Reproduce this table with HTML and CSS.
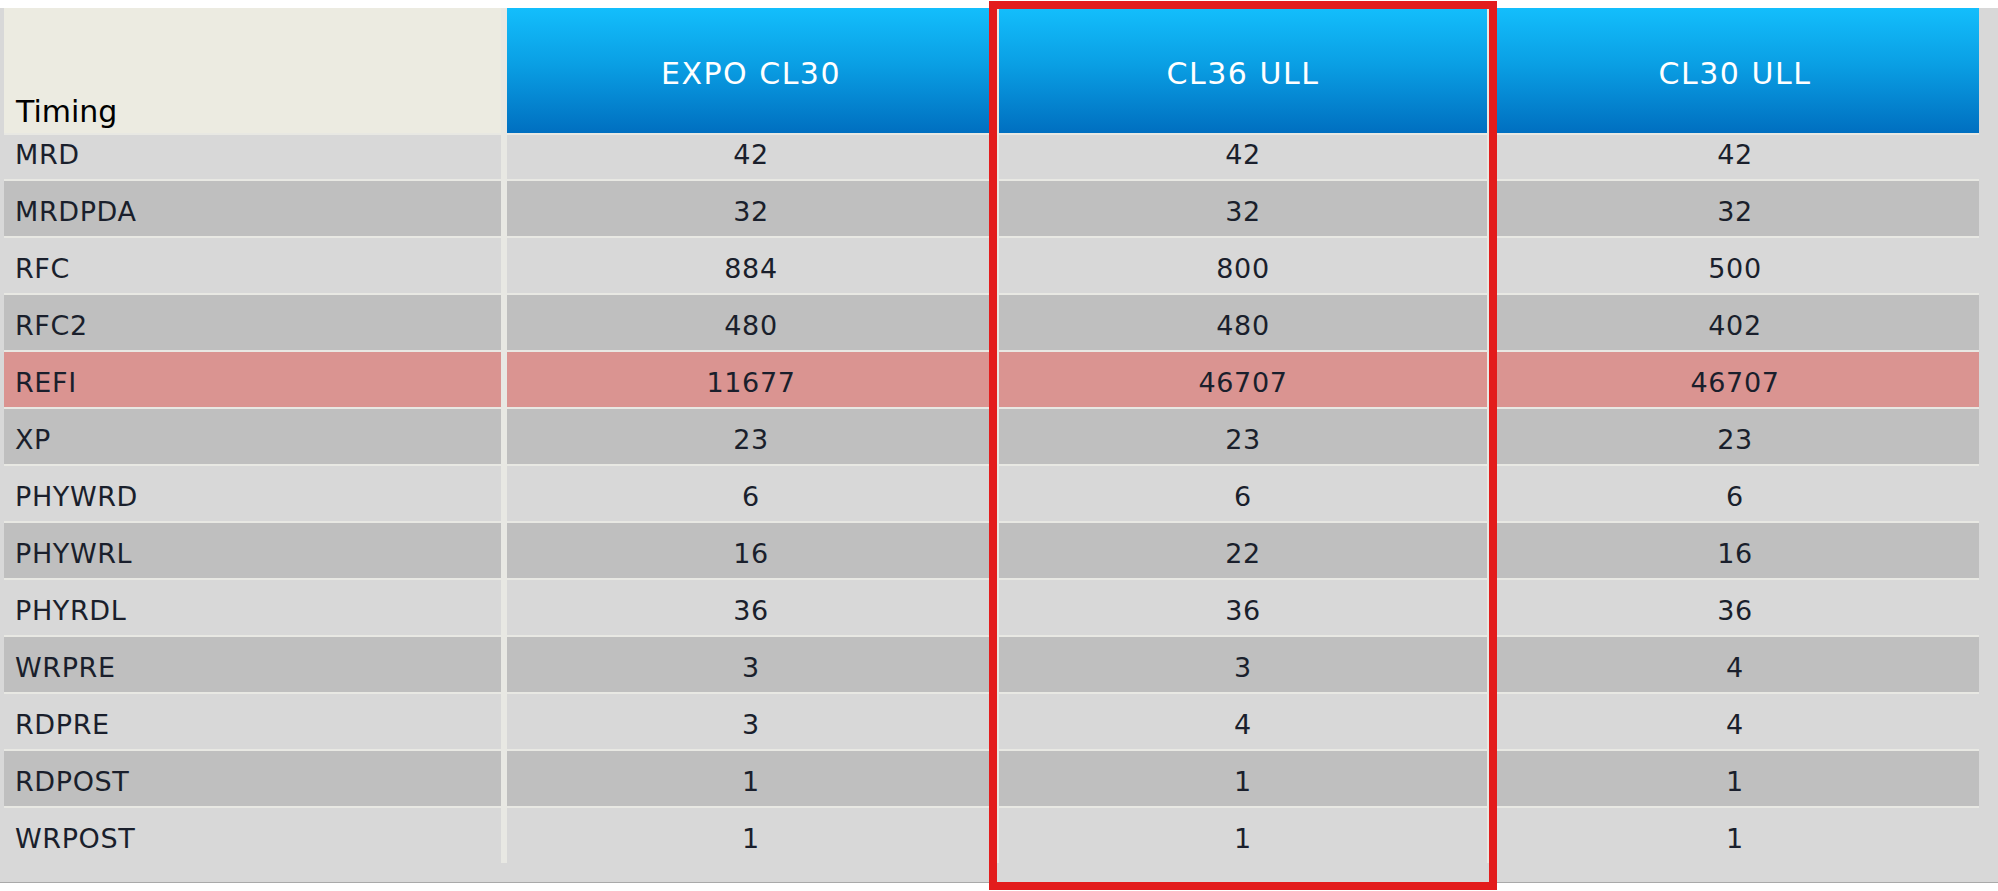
FILE: index.html
```html
<!DOCTYPE html>
<html>
<head>
<meta charset="utf-8">
<link rel="stylesheet" href="styles.css">
</head>
<body>
<div class="panel">
  <div class="grid">
    <div class="corner">Timing</div>
    <div class="head">EXPO CL30</div>
    <div class="head">CL36 ULL</div>
    <div class="head">CL30 ULL</div>

    <div class="lbl light first">MRD</div><div class="val light first">42</div><div class="val light first">42</div><div class="val light first">42</div>
    <div class="lbl dark">MRDPDA</div><div class="val dark">32</div><div class="val dark">32</div><div class="val dark">32</div>
    <div class="lbl light">RFC</div><div class="val light">884</div><div class="val light">800</div><div class="val light">500</div>
    <div class="lbl dark">RFC2</div><div class="val dark">480</div><div class="val dark">480</div><div class="val dark">402</div>
    <div class="lbl pink">REFI</div><div class="val pink">11677</div><div class="val pink">46707</div><div class="val pink">46707</div>
    <div class="lbl dark">XP</div><div class="val dark">23</div><div class="val dark">23</div><div class="val dark">23</div>
    <div class="lbl light">PHYWRD</div><div class="val light">6</div><div class="val light">6</div><div class="val light">6</div>
    <div class="lbl dark">PHYWRL</div><div class="val dark">16</div><div class="val dark">22</div><div class="val dark">16</div>
    <div class="lbl light">PHYRDL</div><div class="val light">36</div><div class="val light">36</div><div class="val light">36</div>
    <div class="lbl dark">WRPRE</div><div class="val dark">3</div><div class="val dark">3</div><div class="val dark">4</div>
    <div class="lbl light">RDPRE</div><div class="val light">3</div><div class="val light">4</div><div class="val light">4</div>
    <div class="lbl dark">RDPOST</div><div class="val dark">1</div><div class="val dark">1</div><div class="val dark">1</div>
    <div class="lbl light">WRPOST</div><div class="val light">1</div><div class="val light">1</div><div class="val light">1</div>
  </div>
</div>
<div class="highlight"></div>
</body>
</html>
```

FILE: styles.css
```css
html, body {
  margin: 0;
  padding: 0;
  background: #ffffff;
}

body {
  position: relative;
  width: 1998px;
  height: 891px;
  overflow: hidden;
  font-family: "DejaVu Sans", "Liberation Sans", sans-serif;
}

.panel {
  margin-top: 8px;
  height: 874px;
  background: #d8d8d8;
  border-bottom: 1px solid #a9a9a9;
  padding-left: 4px;
  box-sizing: content-box;
}

.grid {
  width: 1975px;
  display: grid;
  grid-template-columns: 499px repeat(3, 1fr);
  grid-template-rows: 125px 44px;
  grid-auto-rows: 55px;
  column-gap: 4px;
  row-gap: 2px;
  background: #e8e8e3;
}

.corner {
  margin-right: 2px;
  background: #ecebe1;
  color: #000;
  font-size: 30px;
  line-height: 1;
  display: flex;
  align-items: flex-end;
  padding: 0 0 6px 12px;
}

.head {
  background: linear-gradient(to bottom, #13befc 0%, #0a9fe4 45%, #006fc0 100%);
  color: #ffffff;
  font-size: 30px;
  letter-spacing: 1.5px;
  display: flex;
  align-items: center;
  justify-content: center;
  padding-top: 6px;
}

.lbl, .val {
  display: flex;
  align-items: center;
  color: #1a1f2c;
  font-size: 27px;
  letter-spacing: 0.6px;
  padding-top: 6px;
}

.lbl.first, .val.first {
  padding-top: 0;
  padding-bottom: 6px;
}

.lbl {
  margin-right: 2px;
  padding-left: 11px;
}

.val {
  justify-content: center;
}

.light { background: #d8d8d8; }
.dark { background: #bfbfbf; }
.pink { background: #da9491; }

.highlight {
  position: absolute;
  left: 989px;
  top: 1px;
  width: 508px;
  height: 889px;
  box-sizing: border-box;
  border: 8px solid #e31c1c;
}
```
